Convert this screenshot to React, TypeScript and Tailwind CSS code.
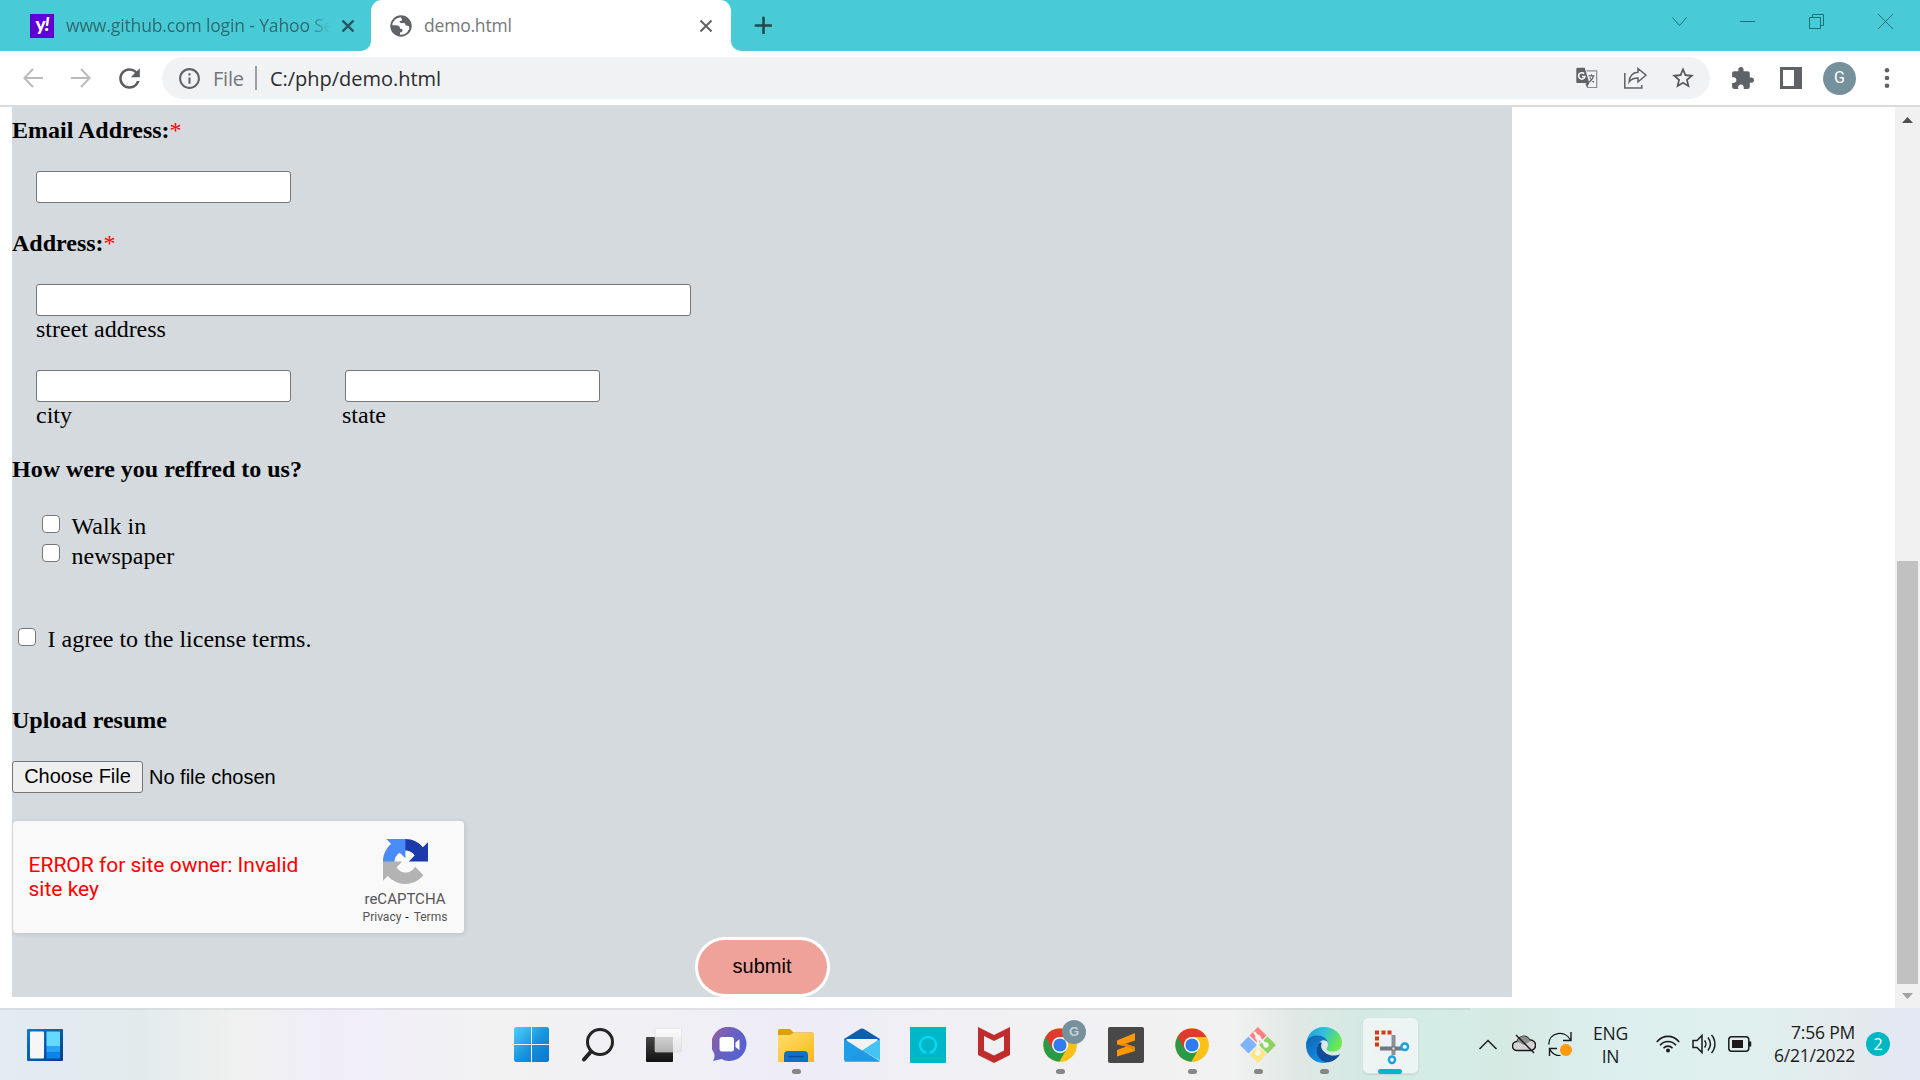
import type { ReactNode } from "react";
import { MdExtension, MdInfoOutline, MdRefresh, MdStarBorder } from "react-icons/md";

const serif = "font-['Liberation_Serif',serif]";
const sans = "font-['Liberation_Sans',sans-serif]";
const ui = "font-['Open_Sans','Noto_Sans',sans-serif]";

function Globe() {
  return (
    <svg className="h-[22px] w-[22px] shrink-0" viewBox="0 0 22 22">
      <circle cx="11" cy="11" r="9.7" fill="#fff" stroke="#5f6368" strokeWidth="2" />
      <path d="M11.5 1.3c-.8 1.2-.5 2.4.6 2.7 0 1.7-1 2-2.4 2.1-.2 1.5 0 1.9 1.5 1.9h2.6c1.5 0 1.7 1 1.7 2.6 1.5 0 3 .1 3.4.9 .4.8.5 1.6 1.1 1.7C21.700 7 18 1.500 11.500 1.300z" fill="#5f6368" />
      <path d="M1 10.500c2.800-.3 5.600-.2 7.200.3 1.600.5 1.800 1.600 1.800 2.900 1.600 0 2.600.4 2.600 1.700s-1 1.700-2.400 1.800c-.4 1.200-.3 2.200-.2 3.300C4.500 20.200 1 15.500 1 10.500z" fill="#5f6368" />
    </svg>
  );
}

function TabStrip() {
  return (
    <div className={`flex h-[51px] bg-[#48cbd6] ${ui}`}>
      <div className="flex w-[371px] items-center pl-[30px]">
        <div className="flex h-6 w-6 shrink-0 items-center justify-center bg-[#5f01d1] font-['Lato',sans-serif] text-[19px] leading-none font-black tracking-[-1px] text-white">
          <span className="-mt-[4px]">y<i>!</i></span>
        </div>
        <div className="ml-3 w-[264px] overflow-hidden text-[17.500px] whitespace-nowrap text-[#2f6a71] [mask-image:linear-gradient(to_right,black_92%,transparent)]">
          <span className="tracking-[-0.130px]">www.github.com login - Yahoo Se</span>
        </div>
        <svg className="ml-3 h-3 w-3" viewBox="0 0 12 12" stroke="#27565c" strokeWidth="2.300"><path d="M.5.5l11 11M11.500.5l-11 11" /></svg>
      </div>
      <div className="relative flex w-[360px] items-center rounded-t-[11px] bg-white pl-[19px] text-[17.500px] text-[#75787b]">
        <svg className="absolute bottom-0 -left-[10px] h-[10px] w-[10px]" viewBox="0 0 10 10"><path d="M10 0v10H0A10 10 0 0 0 10 0z" fill="#fff" /></svg>
        <svg className="absolute -right-[10px] bottom-0 h-[10px] w-[10px]" viewBox="0 0 10 10"><path d="M0 0v10h10A10 10 0 0 1 0 0z" fill="#fff" /></svg>
        <Globe />
        <span className="ml-[12px] w-[263px] tracking-[-0.200px]">demo.html</span>
        <svg className="ml-[13px] h-3 w-3" viewBox="0 0 12 12" stroke="#5f6368" strokeWidth="2"><path d="M.5.5l11 11M11.500.5l-11 11" /></svg>
      </div>
      <svg className="mt-[16px] ml-[23px] h-[18px] w-[18px]" viewBox="0 0 18 18" stroke="#27474b" strokeWidth="2.600" strokeLinecap="round"><path d="M9.500 1.800v15.400M1.800 9.500h15.400" /></svg>
      <div className="mt-[14px] mr-[27px] ml-auto flex h-[15px] items-center text-[#1f6d76]">
        <svg className="mr-[53px] h-[15px] w-[15px]" viewBox="0 0 15 15" fill="none" stroke="currentColor"><path d="M.5 3.500l7 8 7-8" /></svg>
        <svg className="mr-[54px] h-[15px] w-[15px]" viewBox="0 0 15 15" stroke="currentColor"><path d="M0 7.500h15" /></svg>
        <svg className="mr-[54px] h-[15px] w-[15px]" viewBox="0 0 15 15" fill="none" stroke="currentColor"><path d="M.5 3.500h11v11H.5zM3.500 3.500v-3h11v11h-3" /></svg>
        <svg className="h-[15px] w-[15px]" viewBox="0 0 15 15" stroke="currentColor"><path d="M0 0l15 15M15 0L0 15" /></svg>
      </div>
    </div>
  );
}

function TranslateIcon() {
  return (
    <svg className="h-[22px] w-[22px]" viewBox="0 0 22 22">
      <path d="M10.500 3.800h10.200v16.700h-9l-2-4" fill="none" stroke="#8a8d91" strokeWidth="1.200" />
      <path d="M1.500.8h7.200l4.600 15.300H1.500A1.200 1.200 0 0 1 .3 14.900V2A1.200 1.200 0 0 1 1.500.8zM10 16h3.300l-2.300 4.500z" fill="#5f6368" />
      <path d="M8.200 6.700A3.200 3.200 0 1 0 9 9.400H6" fill="none" stroke="#fff" strokeWidth="1.500" />
      <path d="M12.500 8.800h6M15.500 7.300v1.500M17.400 9c-.5 2.600-2.400 5-4.400 6.200M13.800 10.500c.9 1.900 2.300 3.500 4.200 4.700" fill="none" stroke="#5f6368" strokeWidth="1.200" />
    </svg>
  );
}

function Toolbar() {
  return (
    <div className={`flex h-14 items-center border-b-2 border-[#d9dbdd] bg-white pl-[23px] ${ui}`}>
      <svg className="h-5 w-5" viewBox="0 0 20 20" fill="none" stroke="#b9bbbd" strokeWidth="2"><path d="M20 10H1.500M10 1L1.300 10 10 19" /></svg>
      <svg className="ml-7 h-5 w-5" viewBox="0 0 20 20" fill="none" stroke="#b9bbbd" strokeWidth="2"><path d="M0 10h18.500M10 1l8.700 9L10 19" /></svg>
      <MdRefresh className="ml-[23px] h-[31px] w-[31px] text-[#5a5d62]" />
      <div className="ml-[17px] flex h-[42px] w-[1548px] items-center rounded-full bg-[#f1f2f4] pl-[15px]">
        <MdInfoOutline className="h-[25px] w-[25px] text-[#5f6368]" />
        <span className="mt-px ml-[11px] w-[33px] text-[20px] tracking-[-0.200px] text-[#72757a]">File</span>
        <span className="ml-[9px] h-6 w-[2px] bg-[#9b9ea2]" />
        <span className="mt-px ml-[13px] text-[20px] tracking-[-0.030px] text-[#2b2c2f]">C:/php/demo.html</span>
        <div className="mr-[14px] ml-auto flex items-center">
          <TranslateIcon />
          <svg className="ml-[26px] h-[22px] w-[23px]" viewBox="0 0 23 22" fill="none" stroke="#5f6368" strokeWidth="1.500"><path d="M.8 6v15h17v-3M14 1.500l8 6.700-8 6.700v-4c-4 0-6.700.8-8.800 4C5.500 9 8.500 5.500 14 5.200z" /></svg>
          <MdStarBorder className="ml-[23px] h-[26px] w-[26px] text-[#55585d]" />
        </div>
      </div>
      <MdExtension className="ml-[20px] h-[25px] w-[25px] text-[#5f6368]" />
      <svg className="ml-[25px] h-[22px] w-[22px]" viewBox="0 0 22 22"><path d="M0 0h22v22H0z" fill="#5f6368" /><path d="M3 3h11v16H3z" fill="#fff" /></svg>
      <div className="ml-[21px] flex h-[33px] w-[33px] items-center justify-center rounded-full bg-[#76909c] font-['Roboto',sans-serif] text-[16px] text-white">G</div>
      <svg className="ml-[28px] h-5 w-[6px]" viewBox="0 0 6 20" fill="#5f6368"><circle cx="3" cy="2.300" r="2.300" /><circle cx="3" cy="10" r="2.300" /><circle cx="3" cy="17.700" r="2.300" /></svg>
    </div>
  );
}

const field = "block h-8 rounded-[3px] border border-[#767676] bg-white outline-none";
const check = "h-[18px] w-[18px] shrink-0 appearance-none rounded-[4px] border-[1.500px] border-[#767676] bg-white";

function Recaptcha() {
  return (
    <div className="mt-7 ml-[1px] flex h-28 w-[451px] rounded-[4px] bg-[#f9f9f9] font-['Roboto',sans-serif] shadow-[1px_1px_4px_1px_rgba(0,0,0,0.080)]">
      <p className="mt-[32px] ml-[15.500px] w-[300px] text-[21px] leading-6 text-[#ff0000]">ERROR for site owner: Invalid<br />site key</p>
      <div className="ml-[26.500px] flex w-[100px] flex-col items-center pt-[18px] text-[#555]">
        <svg className="h-[45px] w-[45px]" viewBox="0 0 64 64">
          <path fill="#1c3aa9" d="M64 31.955l-.033-1.370V4.687l-7.160 7.160C50.948 4.674 42.033.093 32.050.093c-10.400 0-19.622 4.960-25.458 12.640l11.736 11.860a15.550 15.550 0 0 1 4.754-5.334c2.050-1.600 4.952-2.906 8.968-2.906.485 0 .86.057 1.135.163 4.976.393 9.288 3.140 11.828 7.124l-8.307 8.307L64 31.953" />
          <path fill="#4a8cf7" d="M31.862.094l-1.370.033H4.594l7.160 7.160C4.580 13.147 0 22.060 0 32.046c0 10.400 4.960 19.622 12.640 25.458L24.500 45.768a15.550 15.550 0 0 1-5.334-4.754c-1.600-2.050-2.906-4.952-2.906-8.968 0-.485.057-.86.163-1.135.393-4.976 3.140-9.288 7.124-11.828l8.307 8.307L31.860.095" />
          <path fill="#b3b3b3" d="M.001 32.045l.033 1.370v25.898l7.160-7.160c5.860 7.173 14.774 11.754 24.760 11.754 10.400 0 19.622-4.960 25.458-12.640l-11.736-11.860a15.550 15.550 0 0 1-4.754 5.334c-2.050 1.600-4.952 2.906-8.968 2.906-.485 0-.86-.057-1.135-.163-4.976-.393-9.288-3.140-11.828-7.124l8.307-8.307c-10.522.04-22.400.066-27.295-.005" />
        </svg>
        <span className="mt-[7px] text-[15px] leading-[17px]">reCAPTCHA</span>
        <span className="mt-[2px] flex text-[12px] leading-[14px]">Privacy<span className="mr-[5px] ml-[4px] text-black">-</span>Terms</span>
      </div>
    </div>
  );
}

function Page() {
  return (
    <div className="flex h-[901px] bg-white">
      <form className={`ml-3 flex h-[890px] w-[1500px] flex-col bg-[#d4dade] text-[24px] leading-7 text-black ${serif}`}>
        <h3 className="mt-[9px] font-bold">Email Address:<span className="font-normal text-[#ff0000]">*</span></h3>
        <input className={`mt-[27px] ml-6 w-[255px] ${field}`} />
        <h3 className="mt-[26px] font-bold">Address:<span className="font-normal text-[#ff0000]">*</span></h3>
        <input className={`mt-[27px] ml-6 w-[655px] ${field}`} />
        <div className="-mt-px ml-6">street address</div>
        <div className="mt-[27px] ml-6 flex gap-[54px]">
          <input className={`w-[255px] ${field}`} />
          <input className={`w-[255px] ${field}`} />
        </div>
        <div className="-mt-px ml-6 flex"><span className="w-[306px]">city</span><span>state</span></div>
        <h3 className="mt-[26px] font-bold">How were you reffred to us?</h3>
        <label className="mt-[29px] ml-[30px] flex"><input type="checkbox" className={`mt-[3px] mr-[11.500px] ${check}`} />Walk in</label>
        <label className="mt-[2px] ml-[30px] flex"><input type="checkbox" className={`mt-[2px] mr-[11.500px] ${check}`} />newspaper</label>
        <label className="mt-[55px] ml-[6px] flex"><input type="checkbox" className={`mt-[3px] mr-[11.500px] ${check}`} />I agree to the license terms.</label>
        <h3 className="mt-[53px] font-bold">Upload resume</h3>
        <div className={`mt-[27px] flex h-8 items-center text-[20px] ${sans}`}>
          <button type="button" className="h-8 w-[131px] rounded-[3px] border border-[#767676] bg-[#efefef] pb-[2px] leading-[28px]">Choose File</button>
          <span className="ml-[6px]">No file chosen</span>
        </div>
        <Recaptcha />
        <button type="button" className={`mt-1 ml-[683px] h-[60px] w-[135px] rounded-[30px] border-[3px] border-white bg-[#efa29a] pr-px pb-[3px] text-[20px] ${sans}`}>submit</button>
      </form>
      <div className="ml-auto flex w-[25px] flex-col items-center bg-[#f1f1f1]">
        <svg className="mt-[10px] h-[6px] w-[11px]" viewBox="0 0 11 6"><path d="M0 6l5.500-6L11 6z" fill="#505050" /></svg>
        <div className="mt-[438px] h-[423px] w-[21px] bg-[#c1c1c1]" />
        <svg className="mt-[9px] h-[6px] w-[11px]" viewBox="0 0 11 6"><path d="M0 0h11L5.500 6z" fill="#a3a3a3" /></svg>
      </div>
    </div>
  );
}

function Chrome() {
  return (
    <svg className="h-[34px] w-[34px]" viewBox="0 0 34 34">
      <circle cx="17" cy="17" r="16.700" fill="#fbc116" />
      <path d="M17 17L2.500 8.700A16.700 16.700 0 0 0 16.500 33.700L24 21z" fill="#2a9a48" />
      <path d="M2.500 8.700A16.700 16.700 0 0 1 31.500 9H17l-7.500 12z" fill="#e03a2f" />
      <path d="M17 9h14.500A16.700 16.700 0 0 1 16.500 33.700l7.500-13z" fill="#fbc116" />
      <circle cx="17" cy="17" r="8" fill="#fff" />
      <circle cx="17" cy="17" r="6.600" fill="#2f7cf0" />
    </svg>
  );
}

function Cell({ children, running }: { children: ReactNode; running?: boolean }) {
  return (
    <div className="relative flex h-[73px] w-[66px] items-center justify-center">
      {children}
      {running && <div className="absolute bottom-[7px] left-[29px] h-[5px] w-[9px] rounded-full bg-[#858687]" />}
    </div>
  );
}

function Apps() {
  return (
    <div className="flex">
      <Cell>
        <svg className="mr-[1px] h-[35px] w-[35px]" viewBox="0 0 35 35">
          <defs><linearGradient id="win" gradientUnits="userSpaceOnUse" x1="0" y1="0" x2="35" y2="35"><stop stopColor="#4fd0fb" /><stop offset=".55" stopColor="#1690dc" /><stop offset="1" stopColor="#0577d4" /></linearGradient></defs>
          <path d="M1.500 0H17v17H0V1.500zM18 0h15.500L35 1.500V17H18zM0 18h17v17H1.500L0 33.500zM18 18h17v15.500L33.500 35H18z" fill="url(#win)" />
        </svg>
      </Cell>
      <Cell>
        <svg className="h-[34px] w-[34px]" viewBox="0 0 34 34" fill="none" stroke="#242424"><circle cx="19" cy="14" r="12.500" strokeWidth="3" /><path d="M10 23.500L3 31.500" strokeWidth="4" strokeLinecap="round" /></svg>
      </Cell>
      <Cell>
        <svg className="h-[34px] w-9" viewBox="0 0 36 34">
          <defs>
            <linearGradient id="tv" x2="0" y2="1"><stop stopColor="#454545" /><stop offset="1" stopColor="#111" /></linearGradient>
            <linearGradient id="tw" x2="0" y2="1"><stop stopColor="#fff" stopOpacity=".98" /><stop offset="1" stopColor="#ddd" stopOpacity=".75" /></linearGradient>
            <linearGradient id="tx" x2="0" y2="1"><stop stopColor="#d0d0d0" /><stop offset="1" stopColor="#b2b2b2" /></linearGradient>
          </defs>
          <rect y="9" width="27" height="25" rx="1" fill="url(#tv)" />
          <rect x="9" y=".5" width="26.500" height="23.500" rx="1" fill="url(#tw)" fillOpacity=".8" stroke="#ddd" strokeWidth=".6" />
          <path d="M9 9h18v15H9z" fill="url(#tx)" />
        </svg>
      </Cell>
      <Cell>
        <svg className="mr-[1px] h-[35px] w-[35px]" viewBox="0 0 35 35">
          <defs><linearGradient id="chat" x1=".1" y1=".2" x2=".9" y2=".7"><stop stopColor="#8861a8" /><stop offset=".5" stopColor="#6660c4" /><stop offset="1" stopColor="#5761d0" /></linearGradient></defs>
          <path d="M18 0a17 17 0 1 1-8.500 32L1 34c1.500-3 2-5 1-8A17 17 0 0 1 18 0z" fill="url(#chat)" />
          <rect x="7.500" y="10" width="14.500" height="14.500" rx="2.500" fill="#fff" /><path d="M23.500 15.500l4-3.300v11l-4-3.200z" fill="#fff" />
        </svg>
      </Cell>
      <Cell running>
        <svg className="mt-[2px] h-[33px] w-9" viewBox="0 0 36 33">
          <defs><linearGradient id="fold" x2="1" y2="1"><stop stopColor="#ffdd6c" /><stop offset="1" stopColor="#fbb91b" /></linearGradient></defs>
          <path d="M0 1.500Q0 0 1.500 0H12l3.500 3.500H35L36 5v8H0z" fill="#dda00b" />
          <path d="M0 6h12l3.500-2H36v29H0z" fill="url(#fold)" />
          <path d="M6 33v-7q0-4 4-4h16q4 0 4 4v7z" fill="#0c70cc" /><path d="M11 27.500h14" stroke="#084b99" strokeWidth="1.500" strokeLinecap="round" />
        </svg>
      </Cell>
      <Cell>
        <svg className="h-[34px] w-9" viewBox="0 0 36 34">
          <path d="M0 11L16.500.8q1.500-.8 3 0L36 11v7H0z" fill="#0c5fae" />
          <path d="M2.500 11h31v2L18 22.500 2.500 13z" fill="#f2f2f2" />
          <path d="M0 11l18 11.500L36 33.500H1.500L0 32z" fill="#1f9ee8" />
          <path d="M36 11v21.500L18 22.500z" fill="#45c4f4" /><path d="M0 33.500L18 22.500l18 11z" fill="#2398e2" />
        </svg>
      </Cell>
      <Cell>
        <div className="flex h-9 w-9 items-center justify-center bg-[#00b7c7]">
          <svg className="h-[18px] w-[18px]" viewBox="0 0 18 18"><path d="M7.500 16.800A8 8 0 1 1 10.500 16.800" fill="none" stroke="#00dcff" strokeWidth="2.200" /></svg>
        </div>
      </Cell>
      <Cell>
        <svg className="h-9 w-8" viewBox="0 0 32 36"><path d="M0 0l16 8L32 0v28l-16 8-16-8zM6 9v14.500l10 5 10-5V9l-10 5z" fill="#c02c2c" fillRule="evenodd" /></svg>
      </Cell>
      <Cell running>
        <Chrome />
        <div className={`absolute top-[12px] left-[35px] flex h-6 w-6 items-center justify-center rounded-full bg-[#76909c] text-[13px] font-bold text-[#c3d0d6] ${sans}`}>G</div>
      </Cell>
      <Cell>
        <div className="flex h-9 w-9 items-center justify-center rounded-[2px] bg-[#484848]">
          <svg className="h-6 w-[18px]" viewBox="0 0 18 24"><path d="M0 7.500L18 0v7.500l-9.500 3.300L18 14v4L0 23.500V17l9.500-3.500L0 11.500z" fill="#ff9800" /><path d="M8.500 10.800L18 14v3.800L9.500 13.500 0 11.500z" fill="#ea8600" /></svg>
        </div>
      </Cell>
      <Cell running><Chrome /></Cell>
      <Cell running>
        <svg className="h-9 w-9" viewBox="0 0 36 36">
          <path d="M18 0l8.500 8.500-8.500 8.500-8.500-8.500z" fill="#ff8080" /><path d="M8.500 9.500L17 18l-8.500 8.500L0 18z" fill="#80b3ff" />
          <path d="M27.500 9.500L36 18l-8.500 8.500L19 18z" fill="#8cd35f" /><path d="M18 19l8.500 8.500L18 36l-8.500-8.500z" fill="#ffe680" />
          <path d="M14 5l4 5v16M18 10l8 8" fill="none" stroke="#f4f5f4" strokeWidth="2.500" />
          <circle cx="18" cy="10.500" r="2.700" fill="#f4f5f4" /><circle cx="26" cy="18" r="2.700" fill="#f4f5f4" /><circle cx="18" cy="26" r="2.700" fill="#f4f5f4" />
        </svg>
      </Cell>
      <Cell running>
        <svg className="h-9 w-9" viewBox="0 0 36 36">
          <defs>
            <linearGradient id="et" x2="1" y2=".4"><stop stopColor="#1f9ade" /><stop offset=".5" stopColor="#2fc0dc" /><stop offset="1" stopColor="#6be84c" /></linearGradient>
            <linearGradient id="eb" x2=".6" y2="1"><stop stopColor="#0f64b5" /><stop offset="1" stopColor="#1390e2" /></linearGradient>
          </defs>
          <path d="M0 17C1 7 8 0 18 0c10 0 18 7 18 15.500 0 6-4.500 9-9 9-4 0-6.500-1.200-6.500-2.600 0-1 1.500-1.700 1.500-4.400C22 13 17 8.500 11 8.500S1 12 0 17z" fill="url(#et)" />
          <path d="M0 18C0 12 5 8.300 11 8.300c5.500 0 10 3.200 11 7.200-1.700-2-4-2.700-6-2-4 2-5.500 6-4.500 11 1 5 5 9.500 10 11C9 38 0 29 0 18z" fill="url(#eb)" />
          <path d="M13.500 15.500C9 20 9.500 30 17 34c6 3.500 14-1 17-7-4 2.500-11 2.200-15-1.500-3.500-3-5-6-3-10z" fill="#0f4d99" />
        </svg>
      </Cell>
      <div className="relative mt-[9px] ml-[4.500px] h-[57px] w-[57px] rounded-[6px] border border-[#d4e3df] bg-[#ecf5f3] shadow-[0_1px_1px_rgba(0,0,0,0.080)]">
        <svg className="mt-[9px] ml-[9px] h-[40px] w-[40px]" viewBox="0 0 40 40">
          <rect x="1" y="2" width="25" height="25" rx="2" fill="#eef1f6" />
          <path d="M3 5.500h4M9.500 5.500h4M15.500 5.500h4M5 9.500v4M5 15.500v4" stroke="#d83b01" strokeWidth="4" />
          <path d="M21.500 8v20" stroke="#8b9098" strokeWidth="4" /><path d="M8 21.500h22" stroke="#6f7783" strokeWidth="4" />
          <circle cx="21.500" cy="21.500" r="1.200" fill="#ddd" />
          <rect x="29.500" y="16.500" width="6.500" height="6.500" rx="3" fill="#f2f8fa" stroke="#1f9ee0" strokeWidth="2.400" />
          <rect x="17" y="29.500" width="6" height="6.500" rx="3" fill="#f2f8fa" stroke="#1f9ee0" strokeWidth="2.400" />
        </svg>
        <div className="absolute -bottom-px left-[15px] h-[5px] w-6 rounded-full bg-[#00b7c3]" />
      </div>
    </div>
  );
}

function Tray() {
  return (
    <div className={`mr-[30px] ml-auto flex h-[72px] items-center text-[17.500px] text-[#1b1b1b] ${ui}`}>
      <svg className="h-[11px] w-[18px]" viewBox="0 0 18 11" fill="none" stroke="currentColor" strokeWidth="1.500"><path d="M.5 10L9 1.500l8.500 8.500" /></svg>
      <svg className="ml-[15px] h-5 w-6" viewBox="0 0 24 20" stroke="#1b1b1b" strokeWidth="1.500">
        <path d="M5 16.500a4.300 4.300 0 0 1 0-9C7 2 14 0 17.500 6a5.300 5.300 0 0 1 1.500 10.500z" fill="#d5d5d5" />
        <path d="M5 7.500C7 2 14 0 17.500 6l1.500 1-7 4z" fill="#8d8d8d" stroke="none" />
        <path d="M4 1l18 18" />
      </svg>
      <svg className="ml-3 h-6 w-6" viewBox="0 0 24 24" fill="none" stroke="#1b1b1b" strokeWidth="1.400"><path d="M.8 12.500C1 0 17 -2.500 22.500 8M23 0v8.500h-8M1.500 24v-7.500H9M1.500 17c3 5 7 7 11 6.500" /><circle cx="18" cy="18" r="6" fill="#ff9a0a" stroke="none" /></svg>
      <div className="mt-[2px] ml-[21px] w-[35px] text-center leading-[23px] tracking-[-0.200px]">ENG<br />IN</div>
      <svg className="ml-7 h-[18px] w-6" viewBox="0 0 24 18" fill="none" stroke="currentColor" strokeWidth="1.600"><path d="M.8 7C7-.5 17-.5 23.200 7M4 10.300c4.500-5 11.500-5 16 0M7.500 13.200c2.500-2.800 6.500-2.800 9 0" /><circle cx="12" cy="15.500" r="2" fill="currentColor" stroke="none" /></svg>
      <svg className="ml-3 h-5 w-6" viewBox="0 0 24 20" fill="none" stroke="currentColor" strokeWidth="1.500"><path d="M1 6.500h4l5-5v17l-5-5H1zM12.500 6.500c1.800 2 1.800 5 0 7M16 3.500c3 4 3 9 0 13M19.500 1c4.500 5 4.500 13 0 18" /></svg>
      <svg className="ml-3 h-4 w-6" viewBox="0 0 24 16" fill="none" stroke="currentColor" strokeWidth="1.500"><rect x=".8" y=".8" width="20" height="14.400" rx="3" /><path d="M4 4h11v8H4z" fill="currentColor" stroke="none" /><path d="M22 5.500v5" strokeWidth="2.500" /></svg>
      <div className="ml-3 w-[91px] text-right leading-[23px] tracking-[-0.200px] whitespace-nowrap">7:56 PM<br />6/21/2022</div>
      <div className="ml-[11px] flex h-6 w-6 items-center justify-center rounded-full bg-[#00b7c3] text-[16px] leading-none text-white">2</div>
    </div>
  );
}

function Taskbar() {
  return (
    <div className="relative flex h-[72px] bg-[linear-gradient(to_right,#e3ebf3_0px,#e2ebec_140px,#f0f0f0_240px,#f0edf8_330px,#f2f2f2_500px,#eeedf7_800px,#f0f0f3_1000px,#f2f2f2_1230px,#dfe8e4_1300px,#d3e9e4_1370px,#d4ece6_1440px,#d6e9e3_1510px,#dcefee_1600px,#dff0ee_1740px,#e5eaee_1850px,#e2e7f4_1920px)]">
      <div className="absolute top-0 left-0 h-[2px] w-[1470px] bg-black/6" />
      <div className="w-[499px]">
        <svg className="mt-[21px] ml-[27px] h-8 w-9" viewBox="0 0 36 32">
          <defs><linearGradient id="wd" x2="1" y2="1"><stop stopColor="#0a7ad2" /><stop offset="1" stopColor="#083f88" /></linearGradient></defs>
          <rect width="36" height="32" rx="1" fill="url(#wd)" /><rect x="3" y="2.500" width="14" height="27" rx="1" fill="#f6f6f6" />
          <path d="M19.500 2.500H33V17H19.500z" fill="#66d9ff" /><path d="M19.500 17H33v6.500H19.500z" fill="#26a4f8" /><path d="M19.500 23.500H33v6H19.500z" fill="#0a84ee" />
        </svg>
      </div>
      <Apps />
      <Tray />
    </div>
  );
}

export default function App() {
  return (
    <div className="h-[1080px] w-[1920px] overflow-hidden bg-white">
      <TabStrip />
      <Toolbar />
      <Page />
      <Taskbar />
    </div>
  );
}
